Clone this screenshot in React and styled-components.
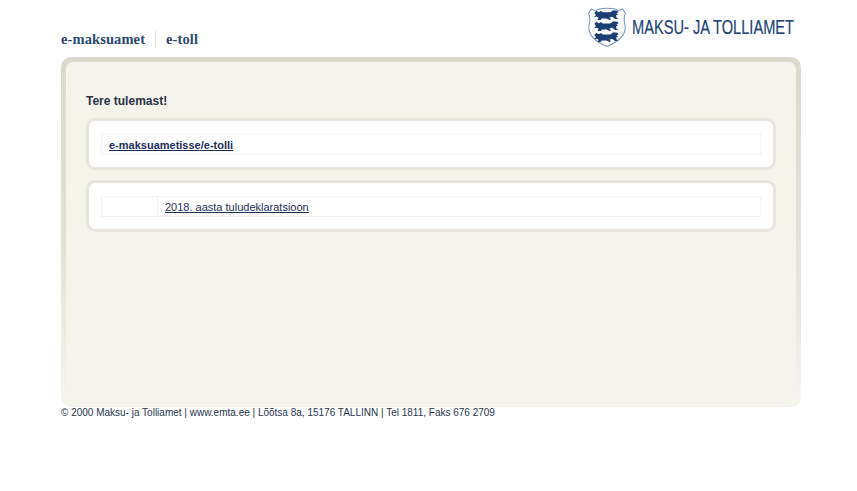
import React from "react";
import styled, { createGlobalStyle } from "styled-components";

const Global = createGlobalStyle`
  html, body {
    margin: 0;
    background: #fff;
    font-family: "Liberation Sans", Arial, sans-serif;
    color: #222f4a;
  }
`;

const Page = styled.div`
  width: 740px;
  margin-left: 61px;
`;

const Header = styled.header`
  height: 57px;
  display: flex;
  justify-content: space-between;
`;

const Services = styled.nav`
  display: flex;
  align-items: center;
  align-self: flex-end;
  height: 16px;
  margin-bottom: 10px;
`;

const Service = styled.a`
  font-family: "Liberation Serif", Georgia, serif;
  font-size: 14.5px;
  font-weight: 700;
  letter-spacing: 0.1px;
  color: #2a4a70;
  & + & {
    margin-left: 10px;
    padding-left: 10px;
    border-left: 1px solid #e6e3d9;
  }
`;

const Logo = styled.div`
  display: flex;
  align-items: flex-start;
  width: 207px;
  margin-right: 6px;
  padding-top: 7px;
`;

const Crest = styled.svg`
  display: block;
  flex: none;
  width: 38px;
  height: 40px;
`;

const LogoText = styled.span`
  flex: none;
  width: 162px;
  margin: 9px 0 0 6px;
  font-size: 19.5px;
  line-height: 22px;
  white-space: nowrap;
  color: #1d4474;
  -webkit-text-stroke: 0.2px #1d4474;
  transform: scaleX(0.75);
  transform-origin: left top;
`;

const Panel = styled.main`
  height: 350px;
  box-sizing: border-box;
  padding: 5px 5px 0;
  border-radius: 10px;
  background: linear-gradient(#dcd9cc 0, #e4e2d7 55%, #f4f3ec 96%);
`;

const PanelInner = styled.div`
  height: 100%;
  box-sizing: border-box;
  padding: 33px 20px 0;
  border-radius: 7px 7px 10px 10px;
  background: #f4f3ec;
`;

const Title = styled.h1`
  margin: 0 0 11px;
  font-size: 12px;
  line-height: 12px;
  font-weight: 700;
  color: #2a3245;
`;

const Card = styled.section`
  box-sizing: border-box;
  height: 52px;
  margin-bottom: 10px;
  padding: 13px 12px;
  background: #fff;
  border: 3px solid #e8e6dc;
  border-radius: 9px;
`;

const Row = styled.div`
  display: flex;
  box-sizing: border-box;
  height: 21px;
  border: 1px solid #f3f2ec;
`;

const Cell = styled.div`
  display: flex;
  align-items: center;
  box-sizing: border-box;
  padding-left: 7px;
  flex: ${(p) => (p.$spacer ? "0 0 55px" : "1")};
  border-left: ${(p) => (p.$divided ? "1px solid #f3f2ec" : "0")};
`;

const RowLink = styled.a`
  font-size: 11px;
  font-weight: ${(p) => (p.$bold ? 700 : 400)};
  color: #1d2f57;
  text-decoration: underline;
`;

const Footer = styled.footer`
  font-size: 10px;
  line-height: 12px;
  color: #28354d;
`;

const Lion = ({ y }) => (
  <g transform={`translate(0 ${y})`} fill="#1c3f73">
    <path d="M6 3 L8 1 L10 2.4 L12.5 1.2 L14 2.6 L21 2.6 L24 0.6 L28 1 L29 2.6 L27 3.4 L28.5 5 L26.5 5.4 L27 7.4 L29 8.6 L25.5 8.8 L23 6.8 L20 7.6 L22 9 L20.5 9.8 L17.5 8.4 L13 8.4 L12 9.8 L9 9.8 L10 7.6 L8 6.6 L5.5 7.2 L7.5 5 Z" />
  </g>
);

export default function App() {
  return (
    <Page>
      <Global />
      <Header>
        <Services>
          <Service>e-maksuamet</Service>
          <Service>e-toll</Service>
        </Services>
        <Logo>
          <Crest viewBox="0 0 36 38" aria-hidden="true">
            <path
              d="M3 2 L7 3.5 C11 0.5 25 0.5 29 3.5 L33 2 L35.5 6 C34 9 34 13 35 17 C36.5 25 31 32 18 37.5 C5 32 -0.5 25 1 17 C2 13 2 9 0.5 6 Z"
              fill="#fff"
              stroke="#7e9abb"
              strokeWidth="1"
            />
            <Lion y={2.5} />
            <Lion y={13} />
            <Lion y={23.5} />
          </Crest>
          <LogoText>MAKSU- JA TOLLIAMET</LogoText>
        </Logo>
      </Header>
      <Panel>
        <PanelInner>
          <Title>Tere tulemast!</Title>
          <Card>
            <Row>
              <Cell>
                <RowLink $bold>e-maksuametisse/e-tolli</RowLink>
              </Cell>
            </Row>
          </Card>
          <Card>
            <Row>
              <Cell $spacer />
              <Cell $divided>
                <RowLink>2018. aasta tuludeklaratsioon</RowLink>
              </Cell>
            </Row>
          </Card>
        </PanelInner>
      </Panel>
      <Footer>© 2000 Maksu- ja Tolliamet | www.emta.ee | Lõõtsa 8a, 15176 TALLINN | Tel 1811, Faks 676 2709</Footer>
    </Page>
  );
}
